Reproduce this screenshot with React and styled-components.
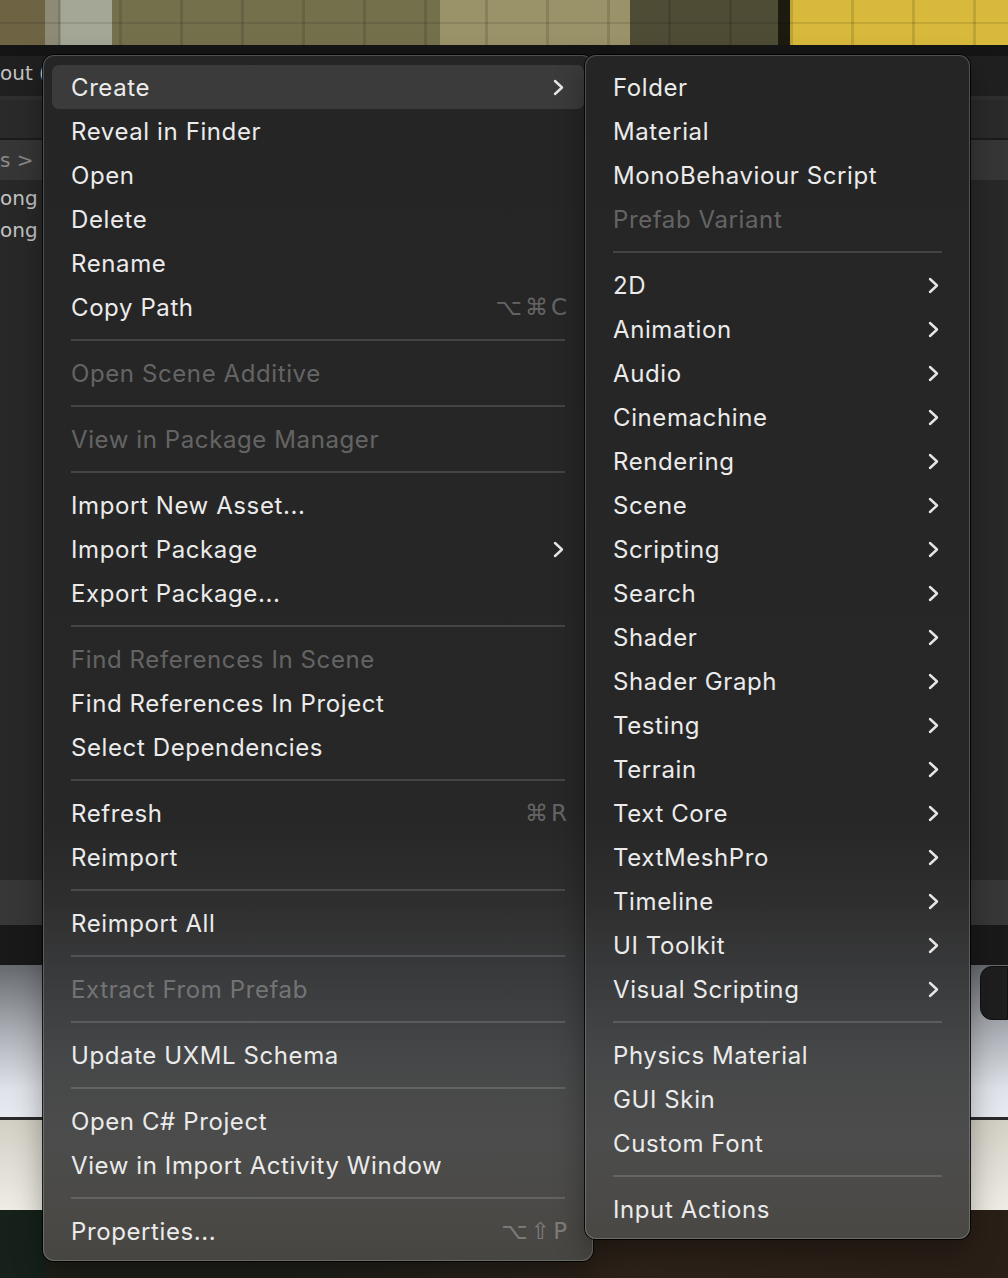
import React from 'react';
import styled, { createGlobalStyle } from 'styled-components';

const GlobalStyle = createGlobalStyle`
  html, body {
    margin: 0;
    padding: 0;
    background: #1a1a1a;
  }
  body {
    font-family: "Inter", "Noto Sans", sans-serif;
    -webkit-font-smoothing: antialiased;
  }
`;

const Page = styled.div`
  position: relative;
  width: 1008px;
  height: 1278px;
  overflow: hidden;
  display: flex;
  flex-direction: column;
`;

const SceneStrip = styled.div`
  height: 45px;
  flex: none;
  background:
    repeating-linear-gradient(to right, transparent 0 58px, rgba(0, 0, 0, 0.12) 58px 61px),
    linear-gradient(to bottom, transparent 0 22px, rgba(0, 0, 0, 0.1) 22px 24px, transparent 24px),
    linear-gradient(
      to right,
      #6e6444 0 45px,
      #8d8a76 45px 60px,
      #a4a796 60px 112px,
      #75704c 112px 440px,
      #9a9268 440px 630px,
      #4e4c34 630px 778px,
      #1d1b10 778px 790px,
      #d8b93c 790px
    );
`;

const Band = styled.div`
  height: ${({ $h }) => $h}px;
  flex: none;
  box-sizing: border-box;
  background: ${({ $bg }) => $bg};
  display: flex;
  align-items: center;
  justify-content: space-between;
`;

const Panel = styled.div`
  flex: none;
  height: 700px;
  background: #282828;
  padding-top: 2px;
  box-sizing: border-box;
`;

const SideLabel = styled.div`
  width: 42px;
  white-space: nowrap;
  font-family: "DejaVu Sans", sans-serif;
  font-size: 20px;
  line-height: 32px;
  color: ${({ $dim }) => ($dim ? '#8a8a8a' : '#c4c4c4')};
`;

const DockButton = styled.div`
  width: 26px;
  height: 52px;
  margin-top: -100px;
  background: #1e1e1e;
  border: 1px solid #111;
  border-radius: 12px 0 0 12px;
`;

const MenuPanel = styled.div`
  position: absolute;
  top: 55px;
  left: ${({ $left }) => $left}px;
  width: ${({ $width }) => $width}px;
  z-index: ${({ $z }) => $z};
  box-sizing: border-box;
  padding: 9px 8px 7px;
  border: 1px solid rgba(255, 255, 255, 0.2);
  border-radius: 11px;
  box-shadow: 0 0 0 1px rgba(0, 0, 0, 0.85), 0 12px 30px rgba(0, 0, 0, 0.35);
  background: linear-gradient(
      to bottom,
      #252525 0,
      #272727 820px,
      #2e2e2f 900px,
      #3a3b3c 980px,
      #464748 1060px,
      #4c4c4c 1140px,
      #4a4946 1220px,
      #46443f 1278px
    )
    fixed;
`;

const Row = styled.div`
  height: 44px;
  display: flex;
  align-items: center;
  padding: 0 ${({ $padR }) => $padR}px 0 19px;
  border-radius: 7px;
  background: ${({ $active }) => ($active ? 'rgba(255, 255, 255, 0.1)' : 'transparent')};
  color: ${({ $disabled }) => ($disabled ? 'rgba(255, 255, 255, 0.3)' : '#ebebeb')};
  font-size: 24px;
  letter-spacing: 0.6px;
  white-space: nowrap;
`;

const Label = styled.span`
  flex: 1;
`;

const Shortcut = styled.span`
  display: flex;
  gap: 3px;
  margin-right: -3px;
  color: rgba(255, 255, 255, 0.3);
  font-family: "DejaVu Sans", "Inter", sans-serif;
  font-size: 23px;
  letter-spacing: 0;
`;

const Separator = styled.div`
  height: 22px;
  display: flex;
  align-items: center;
  padding: 0 19px;

  &::after {
    content: '';
    flex: 1;
    height: 2px;
    background: rgba(255, 255, 255, 0.14);
  }
`;

const Chevron = () => (
  <svg width="11" height="17" viewBox="0 0 11 17">
    <path
      d="M2 2 L9 8.5 L2 15"
      fill="none"
      stroke="#e6e6e6"
      strokeWidth="2.4"
      strokeLinecap="round"
      strokeLinejoin="round"
    />
  </svg>
);

const mainMenu = [
  { label: 'Create', sub: true, active: true },
  { label: 'Reveal in Finder' },
  { label: 'Open' },
  { label: 'Delete' },
  { label: 'Rename' },
  { label: 'Copy Path', keys: ['⌥', '⌘', 'C'] },
  '-',
  { label: 'Open Scene Additive', disabled: true },
  '-',
  { label: 'View in Package Manager', disabled: true },
  '-',
  { label: 'Import New Asset...' },
  { label: 'Import Package', sub: true },
  { label: 'Export Package...' },
  '-',
  { label: 'Find References In Scene', disabled: true },
  { label: 'Find References In Project' },
  { label: 'Select Dependencies' },
  '-',
  { label: 'Refresh', keys: ['⌘', 'R'] },
  { label: 'Reimport' },
  '-',
  { label: 'Reimport All' },
  '-',
  { label: 'Extract From Prefab', disabled: true },
  '-',
  { label: 'Update UXML Schema' },
  '-',
  { label: 'Open C# Project' },
  { label: 'View in Import Activity Window' },
  '-',
  { label: 'Properties...', keys: ['⌥', '⇧', 'P'] },
];

const createMenu = [
  { label: 'Folder' },
  { label: 'Material' },
  { label: 'MonoBehaviour Script' },
  { label: 'Prefab Variant', disabled: true },
  '-',
  ...[
    '2D',
    'Animation',
    'Audio',
    'Cinemachine',
    'Rendering',
    'Scene',
    'Scripting',
    'Search',
    'Shader',
    'Shader Graph',
    'Testing',
    'Terrain',
    'Text Core',
    'TextMeshPro',
    'Timeline',
    'UI Toolkit',
    'Visual Scripting',
  ].map((label) => ({ label, sub: true })),
  '-',
  { label: 'Physics Material' },
  { label: 'GUI Skin' },
  { label: 'Custom Font' },
  '-',
  { label: 'Input Actions' },
];

const Menu = ({ items, left, width, z, padR }) => (
  <MenuPanel $left={left} $width={width} $z={z}>
    {items.map((item, i) =>
      item === '-' ? (
        <Separator key={i} />
      ) : (
        <Row key={i} $active={item.active} $disabled={item.disabled} $padR={padR}>
          <Label>{item.label}</Label>
          {item.sub && <Chevron />}
          {item.keys && (
            <Shortcut>
              {item.keys.map((k) => (
                <span key={k}>{k}</span>
              ))}
            </Shortcut>
          )}
        </Row>
      )
    )}
  </MenuPanel>
);

const App = () => {
  return (
    <>
      <GlobalStyle />
      <Page>
        <SceneStrip />
        <Band $h={55} $bg="linear-gradient(#151515 0 11px, #202020 11px 51px, #2f2f2f 51px)">
          <SideLabel>out (</SideLabel>
        </Band>
        <Band $h={40} $bg="linear-gradient(#2a2a2a 0 38px, #1c1c1c 38px)" />
        <Band $h={40} $bg="#363636">
          <SideLabel $dim>s &gt;</SideLabel>
        </Band>
        <Panel>
          <SideLabel>ong</SideLabel>
          <SideLabel>ong</SideLabel>
        </Panel>
        <Band $h={45} $bg="#373737" />
        <Band $h={40} $bg="#191919" />
        <Band
          $h={155}
          $bg="linear-gradient(#66696e, #aeb1b7 45%, #dfe2e8 80%, #e7eaf0 98%, #2a2a2a 98%)"
        >
          <span />
          <DockButton />
        </Band>
        <Band $h={90} $bg="linear-gradient(#d2cfc5, #efece5)" />
        <Band
          $h={68}
          $bg="linear-gradient(to right, #15211a 0 45px, #1f1f19 45px 300px, #2c2219 600px, #2a1f17)"
        />

        <Menu items={mainMenu} left={43} width={550} z={1} padR={20} />
        <Menu items={createMenu} left={585} width={385} z={2} padR={22} />
      </Page>
    </>
  );
};

export default App;
